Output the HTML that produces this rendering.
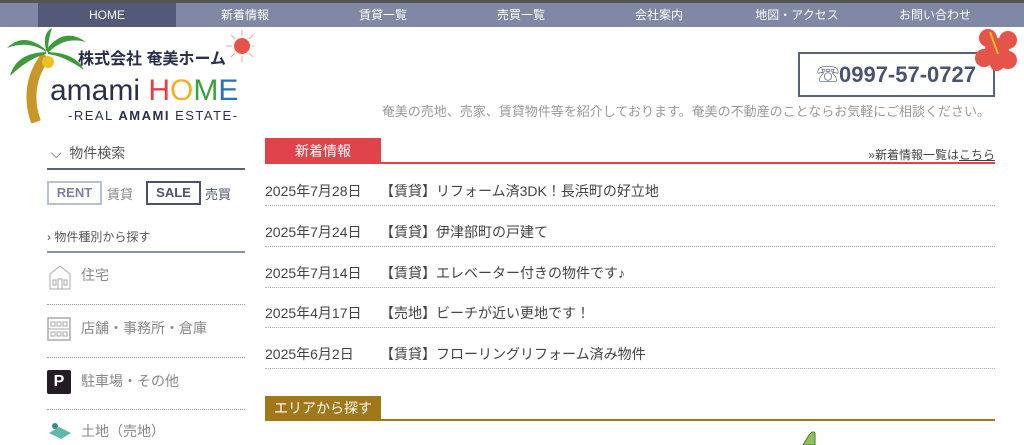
<!DOCTYPE html>
<html><head><meta charset="utf-8"><style>
*{margin:0;padding:0;box-sizing:border-box}
body{width:1024px;height:445px;overflow:hidden;background:#fff;font-family:"Liberation Sans","Noto Sans CJK JP",sans-serif;position:relative;color:#444}
.a{position:absolute}
.nav{top:0;left:0;width:1024px;height:27px;background:#7f88a4;border-top:3px solid #555}
.nav div{position:absolute;top:0;width:138px;height:24px;line-height:24px;text-align:center;color:#fff;font-size:12px}
.row{position:absolute;left:265px;width:730px;height:26px;border-bottom:1px dotted #aaa;font-size:14px;color:#444}
.row span{position:absolute;top:1px}
.side{position:absolute;left:47px;width:198px;font-size:14px;color:#888}
</style></head><body>
<div class="a nav">
<div style="left:38px;background:#525a78">HOME</div>
<div style="left:176px">新着情報</div>
<div style="left:314px">賃貸一覧</div>
<div style="left:452px">売買一覧</div>
<div style="left:590px">会社案内</div>
<div style="left:728px">地図・アクセス</div>
<div style="left:866px">お問い合わせ</div>
</div>
<!-- logo -->
<svg class="a" style="left:4px;top:28px" width="250" height="95">
<path d="M32 94 C24 72 26 48 42 28" stroke="#c9962a" stroke-width="10" fill="none"/>
<g fill="#3e9a3a"><path d="M42 22 Q20 3 3 20 Q25 12 42 24Z"/><path d="M42 22 Q60 -2 82 14 Q60 8 44 25Z"/><path d="M42 24 Q12 25 6 48 Q25 30 42 26Z"/><path d="M44 24 Q72 25 80 42 Q60 28 44 26Z"/><path d="M42 22 Q38 5 48 0 Q44 12 44 22Z"/></g>
<circle cx="44" cy="34" r="6" fill="#f0c020"/>
<circle cx="238" cy="18" r="8" fill="#e9544a"/>
<g stroke="#f4a09a" stroke-width="1"><path d="M238 2v6M238 28v6M222 18h6M248 18h6M227 7l4 4M245 25l4 4M227 29l4-4M245 11l4-4"/></g>
<text x="74" y="36" font-size="16" font-weight="bold" fill="#2a2f4a" font-family="Liberation Sans,Noto Sans CJK JP,sans-serif">株式会社 奄美ホーム</text>
<text x="46" y="72" font-size="30" fill="#2a2f4a" font-family="Liberation Sans,sans-serif">amami <tspan fill="#e2404a">H</tspan><tspan fill="#f0b020">O</tspan><tspan fill="#3aa040">M</tspan><tspan fill="#2a70c0">E</tspan></text>
<text x="64" y="92" font-size="13" fill="#2a2f4a" letter-spacing="1.5" font-family="Liberation Sans,sans-serif">-REAL <tspan font-weight="bold">AMAMI</tspan> ESTATE-</text>
</svg>
<!-- phone -->
<div class="a" style="left:798px;top:52px;width:197px;height:45px;border:2px solid #5a6278;text-align:center;line-height:41px;font-size:22px;font-weight:bold;color:#4a5270">☏0997-57-0727</div>
<svg class="a" style="left:972px;top:26px" width="50" height="46"><g fill="#e5534a"><circle cx="25" cy="24" r="12"/><circle cx="16" cy="12" r="9"/><circle cx="36" cy="14" r="9"/><circle cx="12" cy="32" r="9"/><circle cx="36" cy="34" r="9"/><circle cx="25" cy="38" r="7"/></g><path d="M18 6 L26 28" stroke="#f0c020" stroke-width="2"/></svg>
<div class="a" style="right:34px;top:101px;font-size:13px;color:#999">奄美の売地、売家、賃貸物件等を紹介しております。奄美の不動産のことならお気軽にご相談ください。</div>
<!-- sidebar -->
<div class="side" style="top:143px;height:27px;border-bottom:2px solid #5a6278;color:#555">&nbsp;⌵ &nbsp;物件検索</div>
<div class="a" style="left:47px;top:181px;width:55px;height:24px;border:2px solid #b8c0d8;color:#7a82a0;font-weight:bold;font-size:13px;text-align:center;line-height:20px">RENT</div>
<div class="a" style="left:107px;top:184px;font-size:13px;color:#888">賃貸</div>
<div class="a" style="left:146px;top:181px;width:55px;height:24px;border:2px solid #4a5270;color:#4a5270;font-weight:bold;font-size:13px;text-align:center;line-height:20px">SALE</div>
<div class="a" style="left:205px;top:184px;font-size:13px;color:#4a5270">売買</div>
<div class="side" style="top:228px;height:25px;border-bottom:2px solid #8890a8;font-size:12px;color:#555">› 物件種別から探す</div>
<div class="side" style="top:262px;height:43px;border-bottom:1px dotted #999;padding-left:34px;line-height:26px">住宅</div>
<svg class="a" style="left:48px;top:264px" width="24" height="26"><path d="M2 10 L12 2 L22 10 V25 H2Z" fill="none" stroke="#aaa"/><rect x="5" y="16" width="3" height="5" fill="none" stroke="#aaa"/><rect x="16" y="16" width="3" height="5" fill="none" stroke="#aaa"/><rect x="10" y="15" width="4" height="10" fill="none" stroke="#aaa"/></svg>
<div class="side" style="top:315px;height:43px;border-bottom:1px dotted #999;padding-left:34px;line-height:26px">店舗・事務所・倉庫</div>
<svg class="a" style="left:47px;top:317px" width="24" height="24"><rect x="1" y="1" width="22" height="22" fill="none" stroke="#aaa" stroke-width="1.5"/><path d="M1 12H23" stroke="#aaa"/><rect x="4" y="5" width="4" height="4" fill="none" stroke="#aaa"/><rect x="10" y="5" width="4" height="4" fill="none" stroke="#aaa"/><rect x="16" y="5" width="4" height="4" fill="none" stroke="#aaa"/><rect x="4" y="15" width="4" height="4" fill="none" stroke="#aaa"/><rect x="10" y="15" width="4" height="4" fill="none" stroke="#aaa"/><rect x="16" y="15" width="4" height="4" fill="none" stroke="#aaa"/></svg>
<div class="side" style="top:368px;height:42px;border-bottom:1px dotted #999;padding-left:34px;line-height:26px">駐車場・その他</div>
<div class="a" style="left:47px;top:370px;width:24px;height:24px;background:#231c24;color:#fff;font-weight:bold;font-size:16px;text-align:center;line-height:24px;border-radius:2px">P</div>
<div class="side" style="top:418px;padding-left:34px;line-height:26px">土地（売地）</div>
<svg class="a" style="left:47px;top:421px" width="26" height="20"><path d="M2 12 L12 6 L24 12 L14 18Z" fill="#5fb8a8"/><circle cx="8" cy="5" r="3" fill="#3a8a80"/></svg>
<!-- news -->
<div class="a" style="left:265px;top:138px;width:116px;height:26px;background:#e0434a;color:#fff;font-size:14px;text-align:center;line-height:26px">新着情報</div>
<div class="a" style="left:265px;top:162px;width:730px;height:2px;background:#e0434a"></div>
<div class="a" style="right:29px;top:146px;font-size:12px;color:#444">»新着情報一覧は<u>こちら</u></div>
<div class="row" style="top:180px"><span>2025年7月28日</span><span style="left:115px">【賃貸】リフォーム済3DK！長浜町の好立地</span></div>
<div class="row" style="top:221px"><span>2025年7月24日</span><span style="left:115px">【賃貸】伊津部町の戸建て</span></div>
<div class="row" style="top:262px"><span>2025年7月14日</span><span style="left:115px">【賃貸】エレベーター付きの物件です♪</span></div>
<div class="row" style="top:302px"><span>2025年4月17日</span><span style="left:115px">【売地】ビーチが近い更地です！</span></div>
<div class="row" style="top:343px"><span>2025年6月2日</span><span style="left:115px">【賃貸】フローリングリフォーム済み物件</span></div>
<div class="a" style="left:265px;top:396px;width:116px;height:25px;background:#a07818;color:#fff;font-size:14px;text-align:center;line-height:24px">エリアから探す</div>
<div class="a" style="left:265px;top:419px;width:730px;height:2px;background:#a07818"></div>
<svg class="a" style="left:795px;top:430px" width="40" height="15"><path d="M8 15 L14 5 Q18 0 20 3 L20 15Z" fill="#8fc060" stroke="#4a7a30"/></svg>
</body></html>
